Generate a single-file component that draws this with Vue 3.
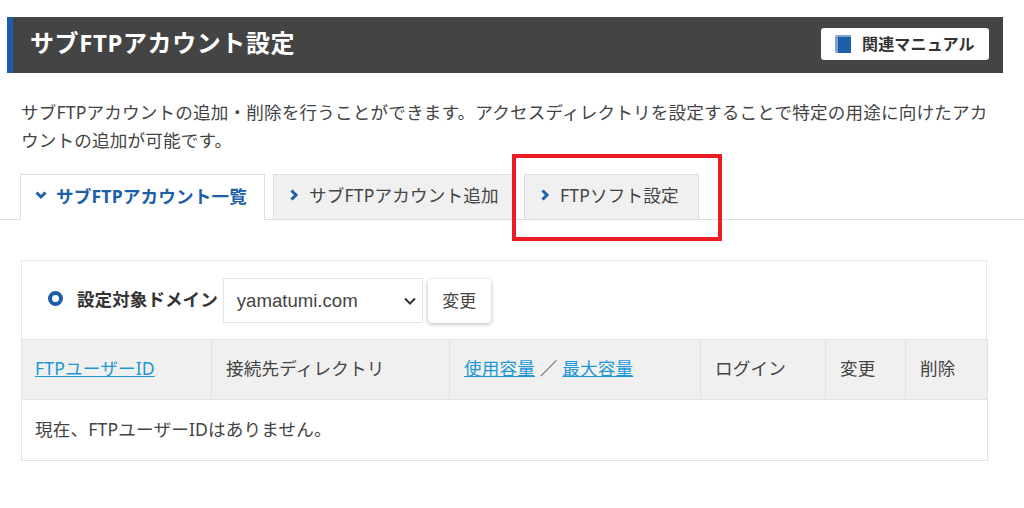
<script setup>
const columns = [
  { key: 'id', width: 190 },
  { key: 'dir', width: 238 },
  { key: 'usage', width: 251 },
  { key: 'login', width: 125 },
  { key: 'edit', width: 80 },
  { key: 'del', width: 82 }
]
</script>

<template>
  <div class="page">
    <header class="heading">
      <h1 class="title">サブFTPアカウント設定</h1>
      <a class="manual">
        <svg class="book" viewBox="0 0 16 18" width="16" height="18" aria-hidden="true">
          <path d="M2 0H16V2H3V18H2A2 2 0 0 1 0 16V2A2 2 0 0 1 2 0Z" fill="#7fa6cf" />
          <rect x="3" y="2" width="13" height="16" fill="#1c5fa8" />
        </svg>
        <span>関連マニュアル</span>
      </a>
    </header>

    <p class="lead">サブFTPアカウントの追加・削除を行うことができます。アクセスディレクトリを設定することで特定の用途に向けたアカウントの追加が可能です。</p>

    <nav class="tabs">
      <a class="tab active">
        <svg class="chev" viewBox="0 0 10 10" width="10" height="10"><path d="M0.5 2.5L5 7L9.5 2.5" /></svg>
        サブFTPアカウント一覧
      </a>
      <a class="tab">
        <svg class="chev" viewBox="0 0 10 10" width="10" height="10"><path d="M2.5 0.5L7 5L2.5 9.5" /></svg>
        サブFTPアカウント追加
      </a>
      <a class="tab">
        <svg class="chev" viewBox="0 0 10 10" width="10" height="10"><path d="M2.5 0.5L7 5L2.5 9.5" /></svg>
        FTPソフト設定
      </a>
      <div class="highlight"></div>
    </nav>

    <section class="panel">
      <div class="domain">
        <span class="ring"></span>
        <span class="domain-label">設定対象ドメイン</span>
        <select class="domain-select">
          <option>yamatumi.com</option>
        </select>
        <button class="change" type="button">変更</button>
      </div>
      <table class="list">
        <colgroup>
          <col v-for="c in columns" :key="c.key" :style="{ width: c.width + 'px' }" />
        </colgroup>
        <thead>
          <tr>
            <th><a class="link">FTPユーザーID</a></th>
            <th>接続先ディレクトリ</th>
            <th><a class="link">使用容量</a> ／ <a class="link">最大容量</a></th>
            <th>ログイン</th>
            <th>変更</th>
            <th>削除</th>
          </tr>
        </thead>
        <tbody>
          <tr>
            <td colspan="6">現在、FTPユーザーIDはありません。</td>
          </tr>
        </tbody>
      </table>
    </section>
  </div>
</template>

<style>
html, body { margin: 0; background: #fff; }
</style>

<style scoped>
.page {
  width: 1024px;
  height: 508px;
  overflow: hidden;
  box-sizing: border-box;
  padding-top: 17px;
  color: #444;
  font-family: "Noto Sans", "Noto Sans CJK JP", sans-serif;
  font-size: 17.6px;
  letter-spacing: 0.16px;
}
.heading {
  margin-left: 7px;
  width: 996px;
  height: 56px;
  box-sizing: border-box;
  background: #444;
  border-left: 6px solid #1c5fa8;
  padding: 0 14px 0 17px;
  display: flex;
  align-items: flex-start;
  justify-content: space-between;
}
.title {
  margin: 8px 0 0;
  color: #fff;
  font-size: 24px;
  font-weight: 700;
  line-height: 36px;
  letter-spacing: 0.6px;
}
.manual {
  width: 168px;
  height: 32px;
  margin-top: 11px;
  box-sizing: border-box;
  background: #fff;
  border-radius: 3px;
  display: flex;
  align-items: center;
  padding: 0 0 3px 14px;
  gap: 11px;
  color: #333;
  font-size: 16px;
  font-weight: 700;
}
.book { flex: none; margin-top: 3px; }
.lead {
  margin: 25px 34px 0 21px;
  line-height: 28px;
  font-size: 17.6px;
  height: 56px;
}
.tabs {
  position: relative;
  margin-top: 20px;
  height: 46px;
  box-sizing: border-box;
  border-bottom: 1px solid #ddd;
  padding-left: 20px;
  display: flex;
  gap: 8px;
}
.tab {
  height: 45px;
  box-sizing: border-box;
  border: 1px solid #ddd;
  border-bottom: 0;
  background: #f0f0f0;
  display: flex;
  align-items: center;
  gap: 10px;
  padding: 0 0 5px 15px;
  white-space: nowrap;
}
.tab:nth-child(1) { width: 245px; }
.tab:nth-child(2) { width: 243px; }
.tab:nth-child(3) { width: 175px; }
.tab.active {
  height: 46px;
  background: #fff;
  color: #1c5fa8;
  font-weight: 700;
}
.chev { flex: none; overflow: visible; }
.chev path {
  fill: none;
  stroke: #1c5fa8;
  stroke-width: 3;
}
.highlight {
  position: absolute;
  left: 512px;
  top: -20px;
  width: 210px;
  height: 87px;
  box-sizing: border-box;
  border: 4px solid #ed1c24;
}
.panel {
  margin: 40px 37px 0 21px;
  width: 966px;
  box-sizing: border-box;
  border: 1px solid #e6e6e6;
  border-bottom: 0;
}
.domain {
  height: 78px;
  display: flex;
  align-items: center;
  padding: 1px 0 0 26px;
  box-sizing: border-box;
}
.ring {
  width: 15px;
  height: 15px;
  box-sizing: border-box;
  border: 4px solid #1c5fa8;
  border-radius: 50%;
  margin: 0 14px 4px 0;
}
.domain-label {
  font-weight: 700;
  font-size: 17.6px;
  letter-spacing: 0;
  color: #333;
  margin: 0 5px 4px 0;
  white-space: nowrap;
}
.domain-select {
  appearance: none;
  width: 200px;
  height: 45px;
  box-sizing: border-box;
  border: 1px solid #e4e4e4;
  border-radius: 0;
  background-color: #fff;
  background-image: url("data:image/svg+xml,%3Csvg xmlns='http://www.w3.org/2000/svg' width='12' height='8' viewBox='0 0 12 8'%3E%3Cpath d='M1 1.5L6 6.5L11 1.5' fill='none' stroke='%23333' stroke-width='2'/%3E%3C/svg%3E");
  background-repeat: no-repeat;
  background-position: 180px 50%;
  color: #444;
  font-family: "Liberation Sans", sans-serif;
  font-size: 18.6px;
  letter-spacing: 0;
  padding: 0 24px 0 13px;
  margin: 0 5px 0 0;
}
.change {
  width: 63px;
  height: 44px;
  border: 0;
  border-radius: 4px;
  background: #fff;
  box-shadow: 0 1px 4px rgba(0, 0, 0, 0.3);
  color: #444;
  font-family: inherit;
  font-size: 17px;
  padding: 0 0 3px;
}
.list {
  width: 966px;
  border-collapse: collapse;
  table-layout: fixed;
  margin-left: -1px;
}
.list th,
.list td {
  box-sizing: border-box;
  border: 1px solid #e2e2e2;
  text-align: left;
  font-weight: 400;
  padding: 0 10px 3px 14px;
  font-size: 17.6px;
}
.list th:first-child,
.list td:first-child { padding-left: 13px; }
.list th {
  background: #f0f0f0;
  height: 60px;
  padding-bottom: 5px;
  white-space: nowrap;
}
.list td { height: 61px; background: #fff; }
.link {
  color: #1e96d8;
  text-decoration: underline;
}
</style>
